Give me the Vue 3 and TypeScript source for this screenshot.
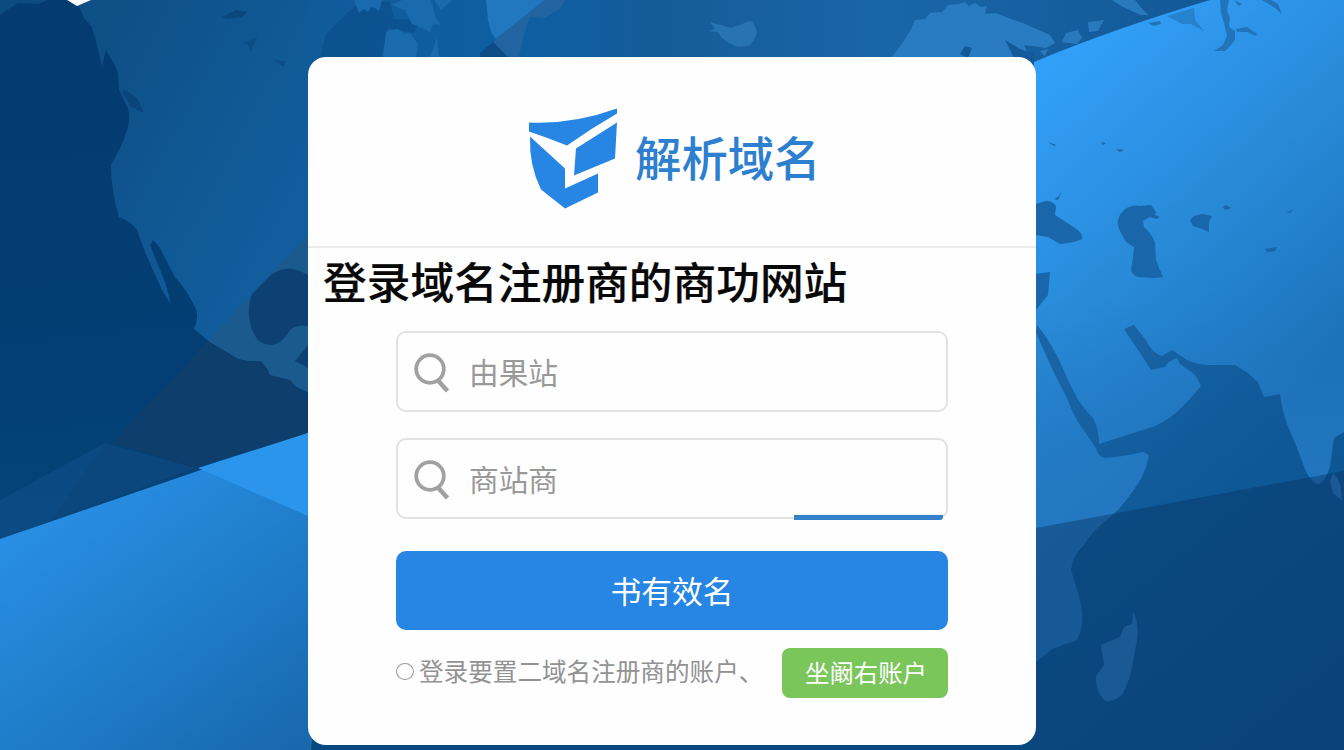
<script setup lang="ts">
import { ref } from 'vue'

interface Field {
  id: string
  placeholder: string
  active: boolean
}

const fields: Field[] = [
  { id: 'domain', placeholder: '由果站', active: false },
  { id: 'registrar', placeholder: '商站商', active: true },
]
const values = ref<Record<string, string>>({ domain: '', registrar: '' })
</script>

<template>
  <main class="page">
    <svg class="backdrop" viewBox="0 0 1344 750" preserveAspectRatio="none" aria-hidden="true">
      <defs>
        <linearGradient id="deep" x1="0" y1="0" x2="0.2" y2="1">
          <stop offset="0" stop-color="#043b70" />
          <stop offset="0.5" stop-color="#033f74" />
          <stop offset="1" stop-color="#084a82" />
        </linearGradient>
        <linearGradient id="mid" gradientUnits="userSpaceOnUse" x1="110" y1="40" x2="320" y2="150">
          <stop offset="0" stop-color="#0e5086" />
          <stop offset="1" stop-color="#125d9e" />
        </linearGradient>
        <linearGradient id="top" gradientUnits="userSpaceOnUse" x1="300" y1="0" x2="1200" y2="0">
          <stop offset="0" stop-color="#125b9a" />
          <stop offset="0.25" stop-color="#0d5fa2" />
          <stop offset="0.4" stop-color="#165b99" />
          <stop offset="0.65" stop-color="#1966a7" />
          <stop offset="1" stop-color="#125998" />
        </linearGradient>
        <linearGradient id="band" gradientUnits="userSpaceOnUse" x1="40" y1="500" x2="250" y2="790">
          <stop offset="0" stop-color="#2990e5" />
          <stop offset="0.45" stop-color="#207fcd" />
          <stop offset="1" stop-color="#1867ac" />
        </linearGradient>
        <linearGradient id="sky" gradientUnits="userSpaceOnUse" x1="1060" y1="60" x2="1330" y2="370">
          <stop offset="0" stop-color="#329ff8" />
          <stop offset="0.5" stop-color="#288ad8" />
          <stop offset="1" stop-color="#1b70b7" />
        </linearGradient>
        <linearGradient id="skyfall" gradientUnits="userSpaceOnUse" x1="0" y1="300" x2="0" y2="520">
          <stop offset="0" stop-color="#2478c1" stop-opacity="0" />
          <stop offset="1" stop-color="#2478c1" stop-opacity="0.9" />
        </linearGradient>
        <linearGradient id="sea" gradientUnits="userSpaceOnUse" x1="1060" y1="380" x2="1320" y2="700">
          <stop offset="0" stop-color="#1864a6" />
          <stop offset="0.4" stop-color="#0f5998" />
          <stop offset="1" stop-color="#0a508e" />
        </linearGradient>
      </defs>

      <rect width="1344" height="750" fill="url(#deep)" />
      <path fill="url(#mid)" d="M76 0L84 18 92 27 97 45 102 66 106 50 113 62 118 72 119 90 128 108Q131 118 127 130Q122 147 111 165Q111 190 119 217Q131 221 137 230L145 252 162 290 171 304 165 282 150 245 153 240Q160 246 163 254L175 277Q187 290 196 309Q199 319 194 329L210 342 238 359Q250 362 260 361Q266 365 270 375L308 392V0Z" />
      <path fill="#1b5a8d" d="M308 235L208 341 238 359Q250 362 260 361Q266 365 270 375L308 392Z" />
      <path fill="#0e3f6c" d="M208 341L238 359Q250 362 260 361Q266 365 270 375L290 380 308 400V433L195 468 112 443Z" />
      <path fill="#0e4173" d="M308 275C292 265 278 268 269 277L252 294C246 309 249 329 258 340C269 349 281 345 288 333C292 326 300 325 308 326ZM308 345L295 361 308 368Z" />
      <path fill="#10508a" opacity=".55" d="M0 500L105 443 195 468 0 539Z" />
      <path fill="#0b4679" opacity=".6" d="M105 443L195 468 50 522Z" />
      <path fill="#073e70" opacity=".6" d="M124 89L137 98 144 113 131 107 122 92ZM222 17L236 10 247 12 242 17 228 19Z" />
      <path fill="#073e70" opacity=".4" d="M242 44L257 37 251 51 247 43ZM273 60L285 61 284 67 279 64Z" />
      <path fill="#13568b" opacity=".6" d="M0 0H48L38 4 18 3 7 10 0 15Z" />
      <path fill="url(#band)" d="M0 539L308 433V750H0Z" />
      <path fill="#2b95ec" d="M198 468L308 433V516Z" />

      <path fill="url(#top)" d="M308 0H1210V90H308Z" />
      <path fill="#0b4f8e" opacity=".75" d="M320 62L322 48 326 34 341 19 355 6 360 0 390 2 394 19 420 20 414 33 388 28 380 62Z" />
      <path fill="#196bae" d="M354 0H382L379 11 375 8 371 7 368 12 364 9 359 13ZM391 5L402 0H431L436 18 441 25 433 24 430 32 422 28 412 24 405 10ZM386 32L391 30 398 29 405 34 410 33 418 44 416 58H383ZM430 58L437 37 439 58ZM434 0H452L441 10Z" />
      <path fill="#2278be" d="M486 0H545L496 39 491 32 488 20Z" />
      <path fill="#2164a1" d="M545 0H565L560 9 545 18 530 17 524 35 518 60H508L501 50 493 42 497 38Z" />
      <path fill="#0d4b85" d="M480 57V53L493 42 501 50 511 60H480Z" />
      <path fill="#2873b1" d="M710 22L716 24 722 25 731 28 740 25 749 21 753 22 757 32Q755 40 750 45Q743 48 735 46L726 41 721 37 718 32 708 31 715 29Z" />
      <path fill="#297cbf" d="M888 62L901 45 910 31 915 20 925 19 930 13 942 12 948 5 959 4 965 2 969 6 975 3 981 7 987 6 985 14 996 13 1008 18 1023 23 1050 35 1055 43 1046 48 1024 45 1031 62Z" />
      <path fill="#135a9b" d="M960 54L965 46 972 48 968 58ZM1005 40L1020 49 1034 54V70H1020Z" />
      <path fill="#297abd" d="M1112 0H1135L1142 9 1149 15 1141 15 1123 7ZM1088 22L1104 20 1098 31 1089 32ZM1062 42L1066 33 1078 30 1082 38 1077 44ZM1040 51L1048 49 1045 56Z" />

      <path fill="url(#sky)" d="M1210 0H1344V750H1034V62Q1110 30 1210 0Z" />
      <path fill="url(#skyfall)" d="M1036 300H1344V750H1036Z" />
      <g fill="#2174b9">
        <path d="M1220 0H1229L1227 10 1230 18 1229 27 1235 31 1235 40 1231 45 1225 51 1214 51 1223 45 1227 36 1224 23 1221 13ZM1236 29L1247 27 1257 34 1256 36 1247 32 1237 32ZM1262 0H1271L1278 4 1282 14 1275 8ZM1234 0L1242 4 1239 6ZM1148 23L1160 21 1161 24 1154 26Z" />
        <path opacity=".65" d="M1167 16L1194 8 1195 20 1204 31 1191 24 1182 24Z" />
      </g>
      <g fill="#1966aa">
        <path d="M1036 204L1046 201Q1053 201 1056 206L1055 215 1075 228Q1083 233 1082 239Q1074 243 1060 244L1048 237 1036 235ZM1036 274L1050 272 1048 295 1036 310ZM1054 199L1058 197 1062 191 1058 200ZM1048 142L1056 145 1054 146Z" />
        <path d="M1125 209Q1133 204 1140 206L1151 205 1156 212 1155 215 1160 217 1156 219 1150 217 1143 221 1144 227Q1152 234 1155 243L1156 260 1159 268 1163 277 1155 278 1138 277Q1131 274 1131 269Q1133 261 1134 247L1126 242 1121 233Q1115 222 1120 215ZM1190 220L1194 216 1202 214 1212 216 1209 222 1209 232 1202 229 1193 226ZM1223 207L1226 205 1231 208 1225 210ZM1265 249L1277 247 1275 251 1267 252ZM1286 212L1293 210 1290 213ZM1101 142L1106 143 1103 145ZM1116 149L1124 150 1120 152Z" />
      </g>
      <path fill="url(#sea)" d="M1037 325C1052 343 1061 363 1067 378L1074 392Q1080 405 1093 418Q1099 429 1099 444L1130 434 1155 426Q1172 418 1183 406Q1193 396 1201 386Q1198 379 1194 374L1180 364 1177 358Q1168 361 1165 367L1151 370 1144 359 1124 329 1134 325 1146 340Q1152 353 1162 356L1172 350 1187 360Q1198 365 1209 365H1235L1248 373 1258 382 1264 397 1280 394Q1282 410 1287 424Q1298 449 1307 474Q1314 484 1319 484Q1326 481 1330 466L1334 438 1344 432V750H1036V662L1052 649 1077 640Q1084 625 1082 613Q1081 600 1075 584L1071 570Q1073 555 1083 546Q1094 529 1108 519L1119 509Q1134 491 1142 477Q1147 466 1149 455L1143 452Q1121 457 1105 458Q1097 456 1096 448L1082 428Q1073 415 1067 398L1055 375 1036 333Z" />
      <path fill="#2777ba" d="M1333 473Q1340 480 1341 489L1342 501 1333 493 1330 482ZM1133 611Q1139 622 1137 640L1133 662Q1130 681 1122 695Q1112 703 1105 701Q1095 692 1096 676L1104 665 1101 645 1120 637 1124 627 1132 624Z" />
      <path fill="#0a3462" opacity=".43" d="M1036 528L1344 471V750H1036Z" />
      <path fill="#09477f" d="M308 720H1036V750H308Z" />
      <path fill="#1b68ac" d="M308 720H314L311 750H308Z" />
      <path fill="#fff" d="M67 0H91L77 6Z" />
    </svg>

    <section class="card">
      <header class="brand">
        <svg class="mark" viewBox="0 0 88 100" aria-hidden="true">
          <g fill="#2785e4">
            <path d="M0 14Q44 16 88 0V5Q62 20 38 37Q18 29 0 23Z" />
            <path d="M1 28L36 60 36 80 69 65V84L36 100 12 81Q0 57 1 28Z" />
            <path d="M47 40L88 14 86 50 45 67Z" />
          </g>
        </svg>
        <span class="brand-name">解析域名</span>
      </header>

      <h1 class="title">登录域名注册商的商功网站</h1>

      <form class="form" @submit.prevent>
        <label v-for="field in fields" :key="field.id" class="field" :class="{ active: field.active }">
          <svg class="search" viewBox="0 0 36 40" aria-hidden="true">
            <path d="M23.5 27L33.5 38" stroke="#a1a1a1" stroke-width="4.6" />
            <circle cx="16" cy="16" r="13.8" fill="none" stroke="#a1a1a1" stroke-width="3.8" />
          </svg>
          <input v-model="values[field.id]" type="text" :placeholder="field.placeholder" />
        </label>

        <button class="submit" type="submit">书有效名</button>

        <div class="footer">
          <span class="bullet"></span>
          <span class="hint">登录要置二域名注册商的账户、</span>
          <button class="register" type="button">坐阚右账户</button>
        </div>
      </form>
    </section>
  </main>
</template>

<style>
body {
  margin: 0;
  overflow: hidden;
}
</style>

<style scoped>
.page {
  position: relative;
  box-sizing: border-box;
  width: 100%;
  height: 750px;
  padding-top: 57px;
  display: flex;
  justify-content: center;
  align-items: flex-start;
  overflow: hidden;
  font-family: 'Noto Sans CJK SC', sans-serif;
}
.backdrop {
  position: absolute;
  inset: 0;
  width: 100%;
  height: 100%;
}
.card {
  position: relative;
  width: 728px;
  height: 688px;
  border-radius: 18px;
  background: #fefefe;
}
.brand {
  box-sizing: border-box;
  height: 191px;
  padding: 51px 0 0 221px;
  display: flex;
  align-items: flex-start;
  gap: 18px;
  border-bottom: 2px solid #ececec;
}
.mark {
  width: 88px;
  height: 101px;
}
.brand-name {
  font-size: 46.4px;
  line-height: 95px;
  font-weight: 500;
  color: #2d7fcf;
}
.title {
  margin: 0;
  padding-left: 15px;
  height: 83px;
  font-size: 43.7px;
  line-height: 65px;
  font-weight: 500;
  color: #080808;
  -webkit-text-stroke: 0.2px #080808;
  white-space: nowrap;
}
.form {
  width: 552px;
  margin: 0 88px;
  display: flex;
  flex-direction: column;
}
.field {
  position: relative;
  box-sizing: border-box;
  height: 81px;
  margin-bottom: 26px;
  padding-left: 16px;
  display: flex;
  align-items: center;
  gap: 19px;
  border: 2px solid #e2e2e2;
  border-radius: 10px;
}
.field.active {
  margin-bottom: 32px;
}
.field.active::after {
  content: '';
  position: absolute;
  right: 3px;
  bottom: -3px;
  width: 149px;
  height: 5px;
  background: #3380cb;
  border-radius: 0 0 3px 0;
}
.search {
  flex: none;
  width: 36px;
  height: 40px;
  margin-top: 3px;
}
.field input {
  flex: 1;
  min-width: 0;
  padding: 0;
  border: 0;
  outline: 0;
  background: transparent;
  font: 400 29.7px/44px 'Noto Sans CJK SC', sans-serif;
  color: #555;
}
.field input::placeholder {
  color: #999;
  opacity: 1;
}
.submit {
  height: 79px;
  padding: 0 0 2px;
  border: 0;
  border-radius: 10px;
  background: #2785e4;
  color: #fff;
  font: 400 30.8px/44px 'Noto Sans CJK SC', sans-serif;
}
.footer {
  margin-top: 18px;
  height: 50px;
  display: flex;
  align-items: center;
}
.bullet {
  flex: none;
  box-sizing: border-box;
  width: 18px;
  height: 17px;
  margin: 0 5px 4px 0;
  border: 1.5px solid #999;
  border-radius: 50%;
}
.hint {
  padding-bottom: 6px;
  font-size: 24.6px;
  color: #929292;
  white-space: nowrap;
}
.register {
  flex: none;
  width: 166px;
  height: 50px;
  margin-left: auto;
  padding: 0 0 3px 2px;
  border: 0;
  border-radius: 8px;
  background: #7ac65b;
  color: #fff;
  font: 400 24.4px/36px 'Noto Sans CJK SC', sans-serif;
}
</style>
